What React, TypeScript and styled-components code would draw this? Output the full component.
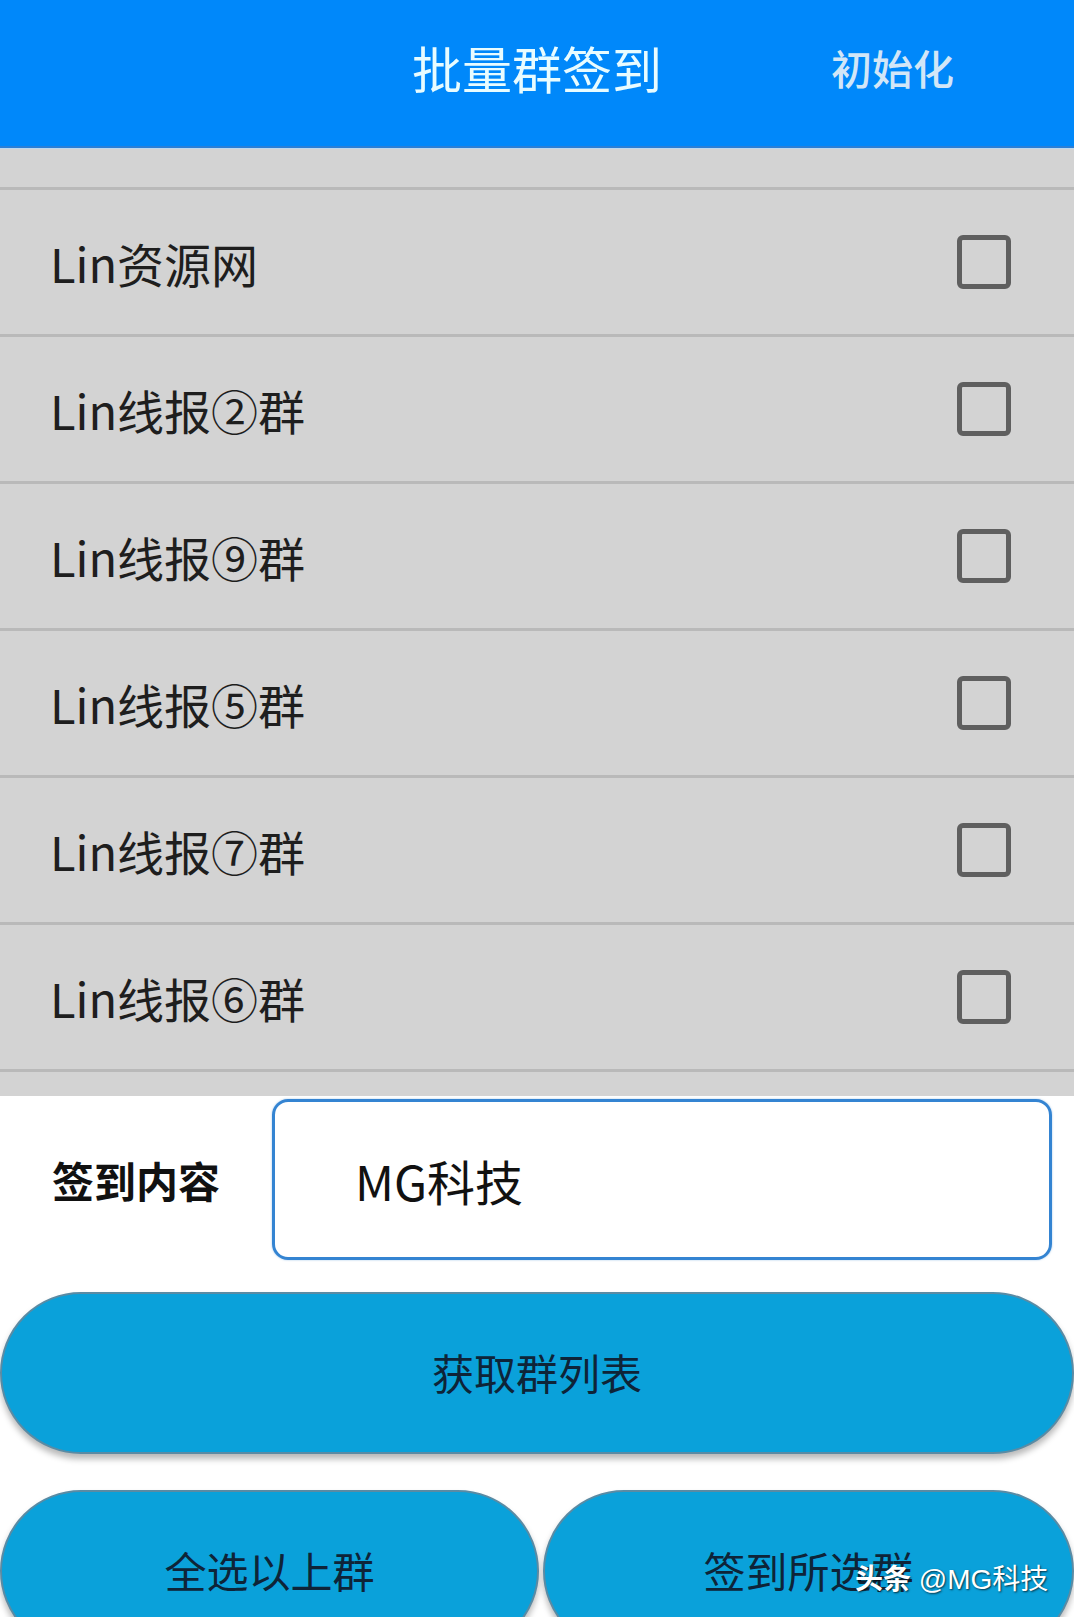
import React from 'react';
import styled, { createGlobalStyle } from 'styled-components';

const GlobalStyle = createGlobalStyle`
  html, body {
    margin: 0;
    padding: 0;
    height: 100%;
    overflow: hidden;
    background: #ffffff;
  }
  body {
    font-family: "Noto Sans CJK SC", "Noto Sans", sans-serif;
  }
`;

const Page = styled.div`
  position: relative;
  width: 1074px;
  background: #ffffff;
`;

const Header = styled.header`
  height: 134px;
  padding-bottom: 12px;
  background: #0088fa;
  border-bottom: 2px solid #2b7fd6;
  display: grid;
  grid-template-columns: 1fr auto 1fr;
  align-items: center;
`;

const Title = styled.h1`
  grid-column: 2;
  margin: 0;
  font-size: 50px;
  font-weight: 400;
  color: #e8fcff;
`;

const HeaderAction = styled.button`
  grid-column: 3;
  justify-self: end;
  margin-right: 120px;
  background: none;
  border: none;
  padding: 0;
  font-family: inherit;
  font-size: 41px;
  font-weight: 500;
  color: #d2e6f7;
`;

const List = styled.div`
  height: 947px;
  overflow: hidden;
  background: #d3d3d3;
  border-top: 1px solid #bcd9f1;
`;

// list is scrolled: the first row is mostly under the header
const ListInner = styled.div<{ $scroll: number }>`
  margin-top: ${p => -p.$scroll}px;
`;

const Row = styled.div`
  height: 144px;
  border-bottom: 3px solid #b9b9b9;
  display: flex;
  align-items: center;
  justify-content: space-between;
  padding: 0 63px 0 50px;
`;

const RowName = styled.span`
  font-size: 47px;
  color: #1e1e1e;
`;

const Check = styled.span`
  width: 44px;
  height: 44px;
  border: 5px solid #5f5f5f;
  border-radius: 6px;
`;

const Bottom = styled.div`
  padding-top: 3px;
`;

const FormRow = styled.div`
  display: flex;
  align-items: center;
  padding: 0 22px 0 52px;
  gap: 52px;
`;

const Label = styled.label`
  font-size: 42px;
  font-weight: 700;
  color: #111111;
  white-space: nowrap;
`;

const Input = styled.div`
  flex: 1;
  height: 155px;
  border: 3px solid #3484d2;
  border-radius: 16px;
  box-shadow: 0 0 2px rgba(52, 132, 210, 0.5);
  display: flex;
  align-items: center;
  padding-left: 80px;
  font-size: 48px;
  color: #111111;
`;

const PillButton = styled.button`
  width: 100%;
  height: 162px;
  border-radius: 81px;
  background: #0aa1da;
  border: 2px solid #5a8ba4;
  box-shadow: 0 5px 6px rgba(0, 0, 0, 0.28);
  font-family: inherit;
  font-size: 42px;
  color: #0e2438;
  display: flex;
  align-items: center;
  justify-content: center;
  padding: 0 0 4px;
`;

const MainAction = styled.div`
  margin-top: 32px;
`;

const ActionGrid = styled.div`
  margin-top: 36px;
  display: grid;
  grid-template-columns: 539px 1fr;
  gap: 4px;
`;

const Watermark = styled.div`
  position: absolute;
  left: 855px;
  top: 1557px;
  font-size: 28px;
  color: #ffffff;
  text-shadow: 1px 1px 2px rgba(0, 0, 0, 0.7);
  white-space: nowrap;
  font-family: "Liberation Sans", "Noto Sans CJK SC", sans-serif;
`;

const WatermarkBrand = styled.span`
  font-weight: 700;
  font-family: "Noto Sans CJK SC", sans-serif;
`;

// rows above and below the visible window are scrolled out of view
const groups = [
  { id: 'g0', name: '' },
  { id: 'g1', name: 'Lin资源网' },
  { id: 'g2', name: 'Lin线报②群' },
  { id: 'g3', name: 'Lin线报⑨群' },
  { id: 'g4', name: 'Lin线报⑤群' },
  { id: 'g5', name: 'Lin线报⑦群' },
  { id: 'g6', name: 'Lin线报⑥群' },
  { id: 'g7', name: '' },
];

export default function App() {
  return (
    <Page>
      <GlobalStyle />
      <Header>
        <Title>批量群签到</Title>
        <HeaderAction>初始化</HeaderAction>
      </Header>
      <List>
        <ListInner $scroll={106}>
          {groups.map(g => (
            <Row key={g.id}>
              <RowName>{g.name}</RowName>
              <Check />
            </Row>
          ))}
        </ListInner>
      </List>
      <Bottom>
        <FormRow>
          <Label>签到内容</Label>
          <Input>MG科技</Input>
        </FormRow>
        <MainAction>
          <PillButton>获取群列表</PillButton>
        </MainAction>
        <ActionGrid>
          <PillButton>全选以上群</PillButton>
          <PillButton>签到所选群</PillButton>
        </ActionGrid>
      </Bottom>
      <Watermark>
        <WatermarkBrand>头条</WatermarkBrand> @MG科技
      </Watermark>
    </Page>
  );
}
